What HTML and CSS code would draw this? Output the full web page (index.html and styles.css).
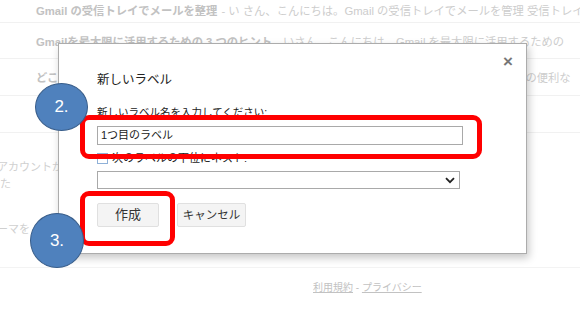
FILE: index.html
```html
<!DOCTYPE html>
<html lang="ja">
<head>
<meta charset="utf-8">
<link rel="stylesheet" href="styles.css">
</head>
<body>
<div class="page">
  <div class="row r1"><span class="subj">Gmail の受信トレイでメールを整理</span> - い さん、こんにちは。Gmail の受信トレイでメールを管理 受信トレイの</div>
  <div class="row r2"><span class="subj">Gmailを最大限に活用するための 3 つのヒント</span> - いさん、こんにちは。Gmail を最大限に活用するための</div>
  <div class="row r3"><span class="subj">どこからでも Gmail にアクセス</span> - いさん、こんにちは。パソコンやスマートフォンからも Gmail の便利な</div>
  <div class="row r4"></div>
  <div class="side">
    <div class="side-l1">アカウントがい</div>
    <div class="side-l2">た</div>
    <div class="side-l3">ーマを</div>
  </div>
  <div class="footer"><span class="flink">利用規約</span> - <span class="flink">プライバシー</span></div>
</div>

<div class="dialog">
  <div class="close">×</div>
  <div class="title">新しいラベル</div>
  <div class="label">新しいラベル名を入力してください:</div>
  <div class="input">1つ目のラベル</div>
  <div class="check-row"><span class="checkbox"></span><span>次のラベルの下位にネスト:</span></div>
  <div class="select">
    <svg class="chev" width="10" height="7" viewBox="0 0 10 7"><path d="M1 1.2 L5 5.2 L9 1.2" fill="none" stroke="#222" stroke-width="1.8"/></svg>
  </div>
  <div class="buttons">
    <div class="btn create">作成</div>
    <div class="btn cancel">キャンセル</div>
  </div>
</div>

<div class="hl hl-input"></div>
<div class="hl hl-btn"></div>
<div class="step s2">2.</div>
<div class="step s3">3.</div>
</body>
</html>
```
FILE: styles.css
```css
html, body {
  margin: 0;
  padding: 0;
  background: #fff;
  width: 580px;
  height: 309px;
  overflow: hidden;
  font-family: "Liberation Sans", "Noto Sans CJK JP", sans-serif;
}
.page {
  color: #cdcdcd;
  font-size: 11.3px;
}
.row {
  box-sizing: border-box;
  border-bottom: 1px solid #f1f1f1;
  padding-left: 36px;
  white-space: nowrap;
  overflow: hidden;
  display: flex;
  align-items: center;
}
.r1 { height: 23px; padding-bottom: 2px; }
.r2 { height: 36px; }
.r3 { height: 37px; }
.r4 { height: 37px; }
.subj { font-weight: bold; color: #c2c2c2; margin-right: 4px; }
.side {
  font-size: 11px;
  line-height: 17px;
  color: #d0d0d0;
  white-space: nowrap;
}
.side-l1 { margin-top: 26px; margin-left: -3px; }
.side-l2 { margin-left: 0; }
.side-l3 { margin-top: 28px; margin-left: -3px; }
.footer {
  margin-top: 29px;
  border-top: 1px solid #f3f3f3;
  padding-top: 11px;
  padding-left: 313px;
  font-size: 10px;
  color: #c2c2c2;
}
.flink { text-decoration: underline; }

.dialog {
  position: absolute;
  left: 58px;
  top: 43px;
  width: 469px;
  height: 211px;
  box-sizing: border-box;
  background: #fff;
  border: 1px solid #acacac;
  box-shadow: 2px 4px 8px rgba(0,0,0,0.22);
  padding: 26px 0 0 38px;
  color: #222;
}
.close {
  position: absolute;
  right: 13px;
  top: 11px;
  font-size: 17px;
  font-weight: bold;
  color: #777;
  line-height: 14px;
}
.title {
  font-size: 12.5px;
  line-height: 20px;
  height: 20px;
}
.label {
  margin-top: 12px;
  font-size: 10.5px;
  line-height: 20px;
  height: 20px;
}
.input {
  margin-top: 4px;
  box-sizing: border-box;
  width: 366px;
  height: 19px;
  border: 1px solid #a9a9a9;
  font-size: 11px;
  line-height: 17px;
  padding-left: 3px;
}
.check-row {
  margin-top: 5px;
  height: 16px;
  display: flex;
  align-items: center;
  font-size: 11px;
  line-height: 16px;
}
.checkbox {
  width: 9px;
  height: 9px;
  border: 1px solid #8fb1d8;
  margin-right: 4px;
  background: #fff;
}
.select {
  margin-top: 5px;
  box-sizing: border-box;
  width: 363px;
  height: 18px;
  border: 1px solid #a9a9a9;
  display: flex;
  align-items: center;
  justify-content: flex-end;
  padding-right: 4px;
}
.buttons {
  margin-top: 14px;
  display: flex;
  gap: 18px;
}
.btn {
  box-sizing: border-box;
  height: 24px;
  border: 1px solid #e0e0e0;
  background: #f4f4f4;
  font-size: 12px;
  line-height: 22px;
  text-align: center;
  color: #333;
  border-radius: 2px;
}
.create { width: 62px; font-size: 13px; }
.cancel { width: 69px; font-size: 11.5px; }

.hl {
  position: absolute;
  box-sizing: border-box;
  border: 5px solid #f00;
  border-radius: 9px;
}
.hl-input { left: 80px; top: 115px; width: 402px; height: 44px; }
.hl-btn { left: 80px; top: 191px; width: 95px; height: 55px; }

.step {
  position: absolute;
  box-sizing: border-box;
  background: #4f81bd;
  border: 1.5px solid #385d8a;
  border-radius: 50%;
  color: #fff;
  font-size: 17px;
  display: flex;
  align-items: center;
  justify-content: center;
}
.s2 { left: 35px; top: 83px; width: 53px; height: 48px; }
.s3 { left: 30px; top: 213px; width: 54px; height: 55px; }
```
